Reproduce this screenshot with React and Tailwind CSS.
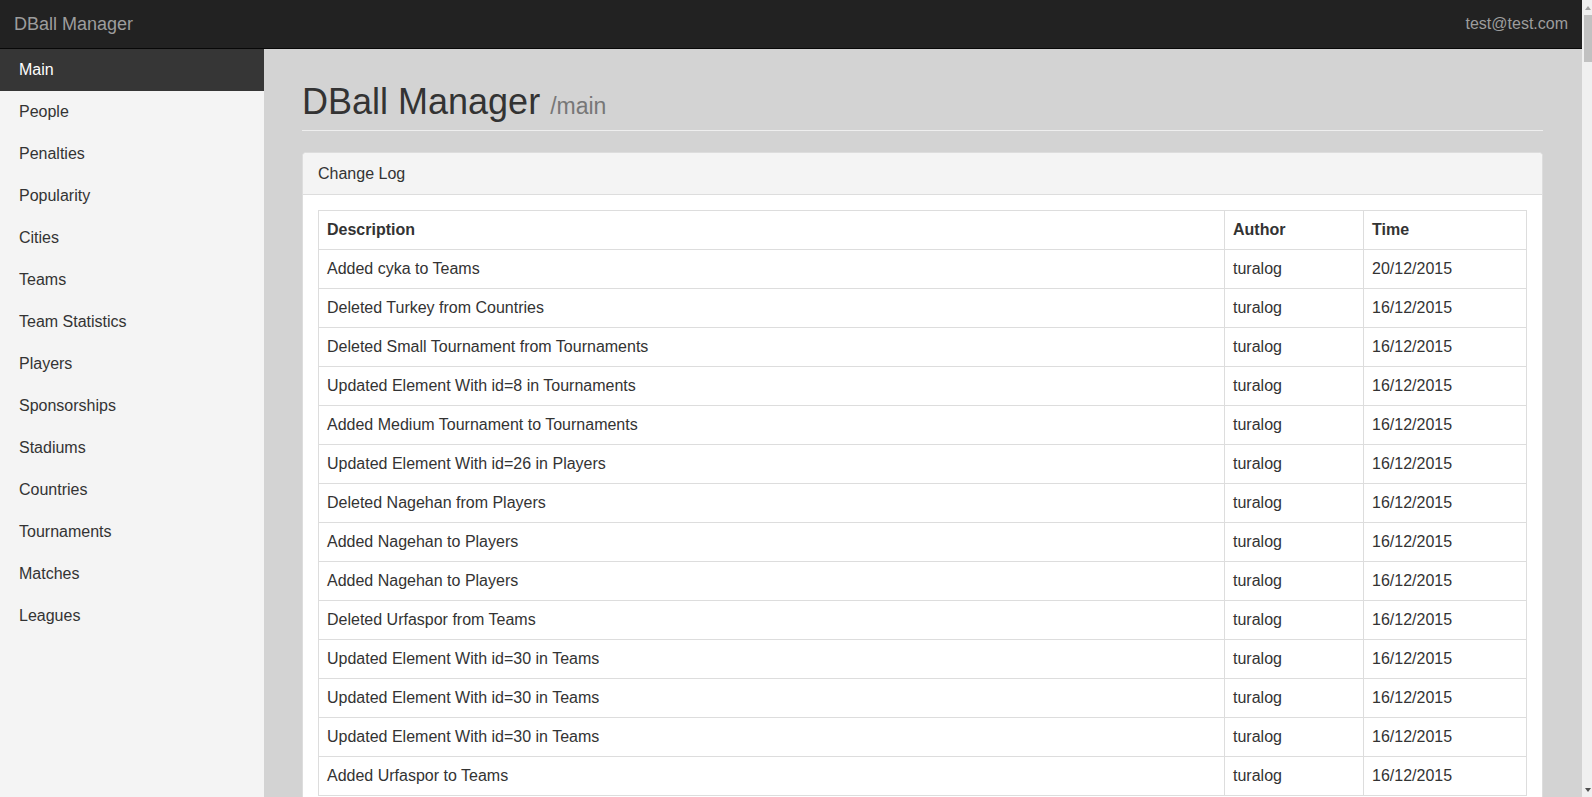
import React from "react";

const navItems = [
  "Main",
  "People",
  "Penalties",
  "Popularity",
  "Cities",
  "Teams",
  "Team Statistics",
  "Players",
  "Sponsorships",
  "Stadiums",
  "Countries",
  "Tournaments",
  "Matches",
  "Leagues",
];

const rows = [
  ["Added cyka to Teams", "turalog", "20/12/2015"],
  ["Deleted Turkey from Countries", "turalog", "16/12/2015"],
  ["Deleted Small Tournament from Tournaments", "turalog", "16/12/2015"],
  ["Updated Element With id=8 in Tournaments", "turalog", "16/12/2015"],
  ["Added Medium Tournament to Tournaments", "turalog", "16/12/2015"],
  ["Updated Element With id=26 in Players", "turalog", "16/12/2015"],
  ["Deleted Nagehan from Players", "turalog", "16/12/2015"],
  ["Added Nagehan to Players", "turalog", "16/12/2015"],
  ["Added Nagehan to Players", "turalog", "16/12/2015"],
  ["Deleted Urfaspor from Teams", "turalog", "16/12/2015"],
  ["Updated Element With id=30 in Teams", "turalog", "16/12/2015"],
  ["Updated Element With id=30 in Teams", "turalog", "16/12/2015"],
  ["Updated Element With id=30 in Teams", "turalog", "16/12/2015"],
  ["Added Urfaspor to Teams", "turalog", "16/12/2015"],
];

export default function App() {
  return (
    <div className="flex h-[797px] w-full overflow-hidden font-['Liberation_Sans',Arial,sans-serif] text-[16px] text-[#333]">
      <div className="flex min-w-0 flex-1 flex-col">
        {/* Navbar */}
        <div className="flex h-[49px] shrink-0 items-center justify-between border-b border-[#080808] bg-[#222] pl-[14px] pr-[14px]">
          <span className="text-[18px] leading-[20px] text-[#9d9d9d]">DBall Manager</span>
          <span className="text-[16px] leading-[20px] text-[#9d9d9d]">test@test.com</span>
        </div>

        <div className="flex min-h-0 flex-1">
          {/* Sidebar */}
          <div className="w-[264px] shrink-0 bg-[#f4f4f4]">
            <ul className="flex flex-col">
              {navItems.map((item, i) => (
                <li
                  key={item}
                  className={
                    i === 0
                      ? "bg-[#363636] py-[10px] pl-[19px] leading-[22px] text-white"
                      : "py-[10px] pl-[19px] leading-[22px] text-[#333]"
                  }
                >
                  {item}
                </li>
              ))}
            </ul>
          </div>

          {/* Main */}
          <div className="min-w-0 flex-1 overflow-hidden bg-[#d3d3d3] pl-[38px] pr-[39px] pt-[33px]">
            <h1 className="border-b border-[#eee] pb-[8px] text-[36px] leading-[40px] text-[#333]">
              DBall Manager <span className="text-[23px] leading-none text-[#777]">/main</span>
            </h1>

            <div className="mt-[21px] rounded-t-[4px] border border-[#ddd] bg-white">
              <div className="rounded-t-[4px] border-b border-[#ddd] bg-[#f4f4f4] px-[15px] py-[10px] leading-[21px]">
                Change Log
              </div>
              <div className="p-[15px]">
                <table className="w-full table-fixed border-collapse">
                  <colgroup>
                    <col className="w-[906px]" />
                    <col className="w-[139px]" />
                    <col />
                  </colgroup>
                  <thead>
                    <tr>
                      <th className="border border-[#ddd] p-[8px] text-left font-bold leading-[22px]">Description</th>
                      <th className="border border-[#ddd] p-[8px] text-left font-bold leading-[22px]">Author</th>
                      <th className="border border-[#ddd] p-[8px] text-left font-bold leading-[22px]">Time</th>
                    </tr>
                  </thead>
                  <tbody>
                    {rows.map((r, i) => (
                      <tr key={i}>
                        <td className="border border-[#ddd] p-[8px] leading-[22px]">{r[0]}</td>
                        <td className="border border-[#ddd] p-[8px] leading-[22px]">{r[1]}</td>
                        <td className="border border-[#ddd] p-[8px] leading-[22px]">{r[2]}</td>
                      </tr>
                    ))}
                  </tbody>
                </table>
              </div>
            </div>
          </div>
        </div>
      </div>

      {/* Fake scrollbar */}
      <div className="flex w-[10px] shrink-0 flex-col bg-[#f0f0f0]">
        <div className="flex h-[15px] items-center justify-end pr-[1px]">
          <svg width="6" height="4" viewBox="0 0 6 4">
            <polygon points="3,0 6,4 0,4" fill="#a3a3a3" />
          </svg>
        </div>
        <div className="ml-[2px] h-[47px] w-[8px] bg-[#c1c1c1]" />
        <div className="flex-1" />
        <div className="flex h-[15px] items-center justify-end pr-[1px]">
          <svg width="6" height="4" viewBox="0 0 6 4">
            <polygon points="0,0 6,0 3,4" fill="#505050" />
          </svg>
        </div>
      </div>
    </div>
  );
}
